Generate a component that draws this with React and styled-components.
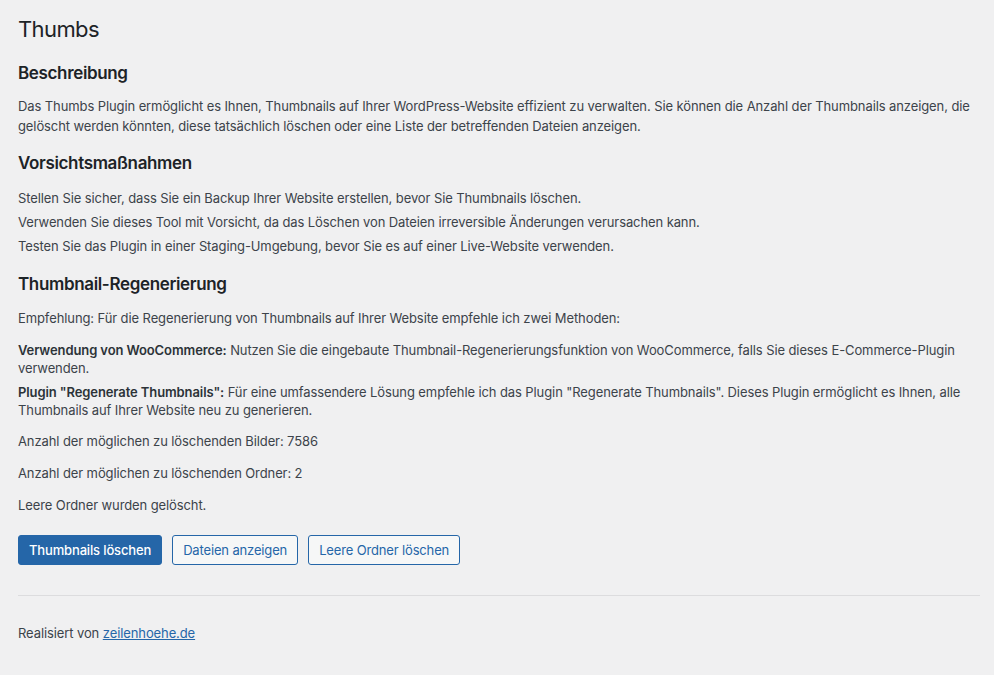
import styled, { createGlobalStyle } from 'styled-components';

const GlobalStyle = createGlobalStyle`
  html, body {
    margin: 0;
    padding: 0;
    background: #f0f0f1;
  }

  body {
    font-family: Inter, "Noto Sans", sans-serif;
    font-size: 13px;
    letter-spacing: -0.1px;
    color: #3c434a;
  }
`;

const Wrap = styled.div`
  display: flex;
  flex-direction: column;
  align-items: stretch;
  min-height: 675px;
  box-sizing: border-box;
  padding: 0 14px 0 18px;
`;

const Title = styled.h1`
  margin: 14px 0 0;
  font-size: 22px;
  font-weight: 400;
  line-height: 30px;
  letter-spacing: -0.6px;
  color: #1d2327;
`;

const Heading = styled.h2`
  margin: ${({ $top }) => $top}px 0 0;
  font-size: 17px;
  font-weight: 600;
  line-height: 22px;
  letter-spacing: -0.35px;
  color: #1d2327;
`;

const Text = styled.p`
  margin: ${({ $top }) => $top}px 0 0;
  line-height: 20px;
`;

const List = styled.ul`
  margin: ${({ $top }) => $top}px 0 0;
  padding: 0;
  list-style: none;
  display: flex;
  flex-direction: column;
  gap: 6px;

  li {
    line-height: 18px;
  }

  strong {
    font-weight: 600;
    color: #2c3338;
  }
`;

const ButtonRow = styled.div`
  display: flex;
  gap: 10px;
  margin-top: 20px;
`;

const Button = styled.button`
  height: 30px;
  padding: 0 10px;
  border-radius: 3px;
  font-family: inherit;
  font-size: 13px;
  letter-spacing: -0.15px;
  cursor: pointer;
  border: 1px solid #2566a8;
  background: ${({ $primary }) => ($primary ? '#2566a8' : '#f6f7f7')};
  color: ${({ $primary }) => ($primary ? '#fff' : '#2566a8')};
  font-weight: ${({ $primary }) => ($primary ? 500 : 400)};
`;

const Divider = styled.hr`
  margin: 30px 0 0;
  border: none;
  border-top: 1px solid #dcdcde;
`;

const Footer = styled.p`
  margin: 27px 0 0;
  line-height: 20px;

  a {
    color: #2566a8;
    text-decoration: underline;
  }
`;

export default function App() {
  return (
    <>
      <GlobalStyle />
      <Wrap>
        <Title>Thumbs</Title>

        <Heading $top={18}>Beschreibung</Heading>
        <Text $top={12}>
          Das Thumbs Plugin ermöglicht es Ihnen, Thumbnails auf Ihrer WordPress-Website effizient zu verwalten. Sie können die Anzahl der Thumbnails anzeigen, die gelöscht werden könnten, diese tatsächlich löschen oder eine Liste der betreffenden Dateien anzeigen.
        </Text>

        <Heading $top={16}>Vorsichtsmaßnahmen</Heading>
        <List $top={15}>
          <li>Stellen Sie sicher, dass Sie ein Backup Ihrer Website erstellen, bevor Sie Thumbnails löschen.</li>
          <li>Verwenden Sie dieses Tool mit Vorsicht, da das Löschen von Dateien irreversible Änderungen verursachen kann.</li>
          <li>Testen Sie das Plugin in einer Staging-Umgebung, bevor Sie es auf einer Live-Website verwenden.</li>
        </List>

        <Heading $top={18}>Thumbnail-Regenerierung</Heading>
        <Text $top={13}>
          Empfehlung: Für die Regenerierung von Thumbnails auf Ihrer Website empfehle ich zwei Methoden:
        </Text>
        <List $top={13}>
          <li>
            <strong>Verwendung von WooCommerce:</strong> Nutzen Sie die eingebaute Thumbnail-Regenerierungsfunktion von WooCommerce, falls Sie dieses E-Commerce-Plugin verwenden.
          </li>
          <li>
            <strong>Plugin "Regenerate Thumbnails":</strong> Für eine umfassendere Lösung empfehle ich das Plugin "Regenerate Thumbnails". Dieses Plugin ermöglicht es Ihnen, alle Thumbnails auf Ihrer Website neu zu generieren.
          </li>
        </List>

        <Text $top={12}>Anzahl der möglichen zu löschenden Bilder: 7586</Text>
        <Text $top={12}>Anzahl der möglichen zu löschenden Ordner: 2</Text>
        <Text $top={12}>Leere Ordner wurden gelöscht.</Text>

        <ButtonRow>
          <Button $primary>Thumbnails löschen</Button>
          <Button>Dateien anzeigen</Button>
          <Button>Leere Ordner löschen</Button>
        </ButtonRow>

        <Divider />

        <Footer>
          Realisiert von <a href="#">zeilenhoehe.de</a>
        </Footer>
      </Wrap>
    </>
  );
}
